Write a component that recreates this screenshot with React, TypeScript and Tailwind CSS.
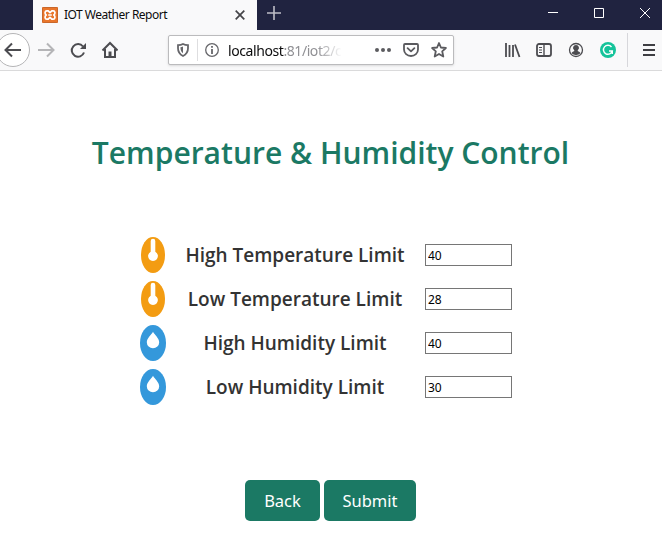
import React from "react";

const ui = "font-['Noto_Sans','Open_Sans',sans-serif]";

function TabStrip() {
  return (
    <div className="flex h-[30px] bg-[#202340]">
      <div className="ml-[33px] flex h-[30px] w-[224px] items-center bg-[#f9f9fa] pl-[9px]">
        <svg width="16" height="16" viewBox="0 0 16 16" className="shrink-0">
          <rect width="16" height="16" rx="1" fill="#e9762b" />
          <rect x=".5" y=".5" width="15" height="15" rx="1" fill="none" stroke="#c8672b" />
          <path d="M4.800 3.800h1.400L8 5.600l1.800-1.800h1.400c2 0 2.400 3 .6 4.200 1.800 1.200 1.400 4.200-.6 4.200H9.800L8 10.400l-1.800 1.800H4.800c-2 0-2.400-3-.6-4.200C2.400 6.800 2.800 3.800 4.800 3.800ZM6.200 8h3.600" fill="none" stroke="#fff" strokeWidth="1.700" strokeLinejoin="round" />
        </svg>
        <span className="ml-[6px] w-[104px] whitespace-nowrap text-[12px] leading-4 tracking-[-0.5px] text-[#0c0c0d]">IOT Weather Report</span>
        <svg width="10" height="10" viewBox="0 0 10 10" className="ml-[67px] shrink-0">
          <path d="M.7.7l8.600 8.600M9.300.7L.7 9.300" stroke="#444448" strokeWidth="1.700" />
        </svg>
      </div>
      <svg width="14" height="14" viewBox="0 0 14 14" className="ml-[10px] mt-[6px]">
        <path d="M7 0v14M0 7h14" stroke="#bdbdc6" strokeWidth="1.6" />
      </svg>
      <svg width="102" height="10" viewBox="0 0 102 10" className="ml-auto mr-[12px] mt-[8px]" fill="none" stroke="#fff">
        <path d="M0 4.500h10M46.500.500h9v9h-9zM92 0l10 10M102 0L92 10" />
      </svg>
    </div>
  );
}

function AddressBar() {
  return (
    <div className="ml-[50px] flex h-[30px] w-[286px] items-center rounded-[2px] border border-[#bbbbbd] bg-white shadow-sm">
      <svg width="12" height="14" viewBox="0 0 12 14" className="ml-[8px] shrink-0">
        <path d="M6 1C4.500 1.800 2.800 2.100 1 2.100v3.200C1 9 3.200 11.700 6 13c2.800-1.300 5-4 5-7.700V2.100C9.200 2.100 7.500 1.800 6 1Z" fill="none" stroke="#66666a" strokeWidth="1.8" />
        <path d="M6 3.600v6.700C4.500 9.100 3.500 7.500 3.500 5.300V4.200C4.400 4.100 5.200 3.900 6 3.600Z" fill="#66666a" />
      </svg>
      <div className="ml-[8px] h-[22px] w-px bg-[#dedee0]" />
      <svg width="14" height="14" viewBox="0 0 14 14" className="ml-[7px] shrink-0">
        <circle cx="7" cy="7" r="6.300" fill="none" stroke="#66666a" strokeWidth="1.300" />
        <path d="M7 3v1.700M7 6v5" stroke="#66666a" strokeWidth="1.800" />
      </svg>
      <div className="ml-[9px] mt-px w-[114px] whitespace-nowrap text-[14px] leading-5 tracking-[-0.42px] text-[#909094] [mask-image:linear-gradient(to_right,black_78%,transparent_100%)]">
        <span className="text-[#0c0c0d]">localhost</span>:81/iot2/c
      </div>
      <svg width="16" height="4" viewBox="0 0 16 4" className="ml-[33px] shrink-0" fill="#5b5b5f">
        <circle cx="2" cy="2" r="2" /><circle cx="8" cy="2" r="2" /><circle cx="14" cy="2" r="2" />
      </svg>
      <svg width="16" height="16" viewBox="0 0 16 16" className="ml-[12px] shrink-0" fill="none" stroke="#5b5b5f" strokeWidth="1.800">
        <path d="M2 2h12q1 0 1 1v4.500a7 6.500 0 0 1-14 0V3q0-1 1-1Z" />
        <path d="M4.600 6.200L8 9.400l3.400-3.200" strokeLinecap="round" strokeLinejoin="round" />
      </svg>
      <svg width="16" height="16" viewBox="0 0 16 16" className="ml-[12px] shrink-0" fill="none" stroke="#5b5b5f" strokeWidth="1.800" strokeLinejoin="round">
        <path d="M8 1l1.900 4.500 5 .5-3.700 3.300 1.100 5.200L8 12l-4.300 2.500 1.100-5.200L1.100 6l5-.5Z" />
      </svg>
    </div>
  );
}

function Toolbar() {
  return (
    <div className="flex h-[41px] items-center border-b border-[#dadadb] bg-[#f9f9fa]">
      <svg width="118" height="36" viewBox="0 0 118 36" className="shrink-0" fill="none" stroke="#4c4c50" strokeWidth="2">
        <circle cx="13" cy="18" r="16.500" fill="#fff" stroke="#b5b5b7" strokeWidth="1" />
        <path d="M21 18H6M12 11.500L5.500 18l6.500 6.500" />
        <path d="M38 18h15M47 11.500l6.500 6.500-6.500 6.500" stroke="#b5b5b7" />
        <path d="M83 14.500A6.300 6.300 0 1 0 84 20.500" />
        <path d="M86 11v6h-6Z" fill="#4c4c50" stroke="none" />
        <path d="M102.500 18.500L110 11l7.500 7.500M105 17v8h10v-8" />
        <path d="M108.500 19.500h3V25h-3z" fill="#4c4c50" stroke="none" />
      </svg>
      <AddressBar />
      <svg width="112" height="16" viewBox="0 0 112 16" className="ml-[50px] shrink-0" fill="none" stroke="#4c4c50" strokeWidth="1.800">
        <path d="M2 1v14M5.500 3v12M9 3v12M11 2.500l4.500 12.500" />
        <rect x="33" y="2" width="14" height="12" rx="2" />
        <path d="M40 2v12" strokeWidth="1.400" />
        <path d="M35 5.500h3M35 8h3M35 10.500h3" strokeWidth="1" />
        <circle cx="72" cy="8" r="6.500" strokeWidth="1.300" />
        <path d="M72 3a2.900 2.900 0 0 1 1.700 5.300l.2.900c1.300.2 2.200.8 2.500 2A5.500 5.500 0 0 1 72 13a5.500 5.500 0 0 1-4.400-1.800c.3-1.200 1.200-1.800 2.500-2l.2-.9A2.900 2.900 0 0 1 72 3Z" fill="#4c4c50" stroke="none" />
        <circle cx="104" cy="8" r="8" fill="#15c39a" stroke="none" />
        <path d="M107.500 5A4.500 4.500 0 1 0 108.300 9H105M108.300 9v3" stroke="#fff" strokeWidth="1.400" />
      </svg>
      <div className="ml-[11px] h-[34px] w-px bg-[#d7d7db]" />
      <svg width="12" height="12" viewBox="0 0 12 12" className="ml-[15px] shrink-0">
        <path d="M0 1h12M0 6h12M0 11h12" stroke="#3f3f43" strokeWidth="2" />
      </svg>
    </div>
  );
}

function LimitIcon({ kind }: { kind: "temperature" | "humidity" }) {
  return kind === "temperature" ? (
    <svg width="24" height="36" viewBox="0 0 24 36">
      <ellipse cx="12" cy="18" rx="12" ry="18" fill="#f39c12" />
      <path d="M9.700 4a2.300 2.300 0 0 1 4.600 0v10.700a4.900 4.900 0 1 1-4.600 0Z" fill="#fff" />
    </svg>
  ) : (
    <svg width="26" height="36" viewBox="0 0 26 36">
      <ellipse cx="13" cy="18" rx="13" ry="18" fill="#3498db" />
      <path d="M13 6.800c1.500 3 6.200 6.500 6.200 10.400a6.200 6 0 0 1-12.400 0C6.800 13.300 11.500 9.800 13 6.800Z" fill="#fff" />
    </svg>
  );
}

const limits: { kind: "temperature" | "humidity"; label: string; value: string }[] = [
  { kind: "temperature", label: "High Temperature Limit", value: "40" },
  { kind: "temperature", label: "Low Temperature Limit", value: "28" },
  { kind: "humidity", label: "High Humidity Limit", value: "40" },
  { kind: "humidity", label: "Low Humidity Limit", value: "30" },
];

export default function App() {
  return (
    <div className={`h-[552px] w-[662px] overflow-hidden bg-white ${ui}`}>
      <TabStrip />
      <Toolbar />
      <main className="flex w-[661px] flex-col items-center">
        <h1 className="mt-[62px] whitespace-nowrap font-['Open_Sans',sans-serif] text-[30px] font-semibold leading-[40px] text-[#1b7964]">
          Temperature &amp; Humidity Control
        </h1>
        <div className="mt-[60px] flex w-[371px] flex-col">
          {limits.map((row) => (
            <div key={row.label} className="flex h-[44px] items-center">
              <div className="-ml-[5px] flex w-[26px] justify-center">
                <LimitIcon kind={row.kind} />
              </div>
              <div className="mr-px w-[258px] whitespace-nowrap text-center font-['Open_Sans',sans-serif] text-[19px] font-semibold leading-6 text-[#333]">
                {row.label}
              </div>
              <input className="h-[22px] w-[87px] shrink-0 border border-[#767676] bg-white px-[2px] text-[12px] text-black outline-none" defaultValue={row.value} />
            </div>
          ))}
        </div>
        <div className="mt-[71px] flex gap-1 text-[16.5px] leading-6 text-white">
          <button className="h-[41px] w-[75px] rounded-[5px] bg-[#1b7964]">Back</button>
          <button className="h-[41px] w-[92px] rounded-[5px] bg-[#1b7964]">Submit</button>
        </div>
      </main>
    </div>
  );
}
